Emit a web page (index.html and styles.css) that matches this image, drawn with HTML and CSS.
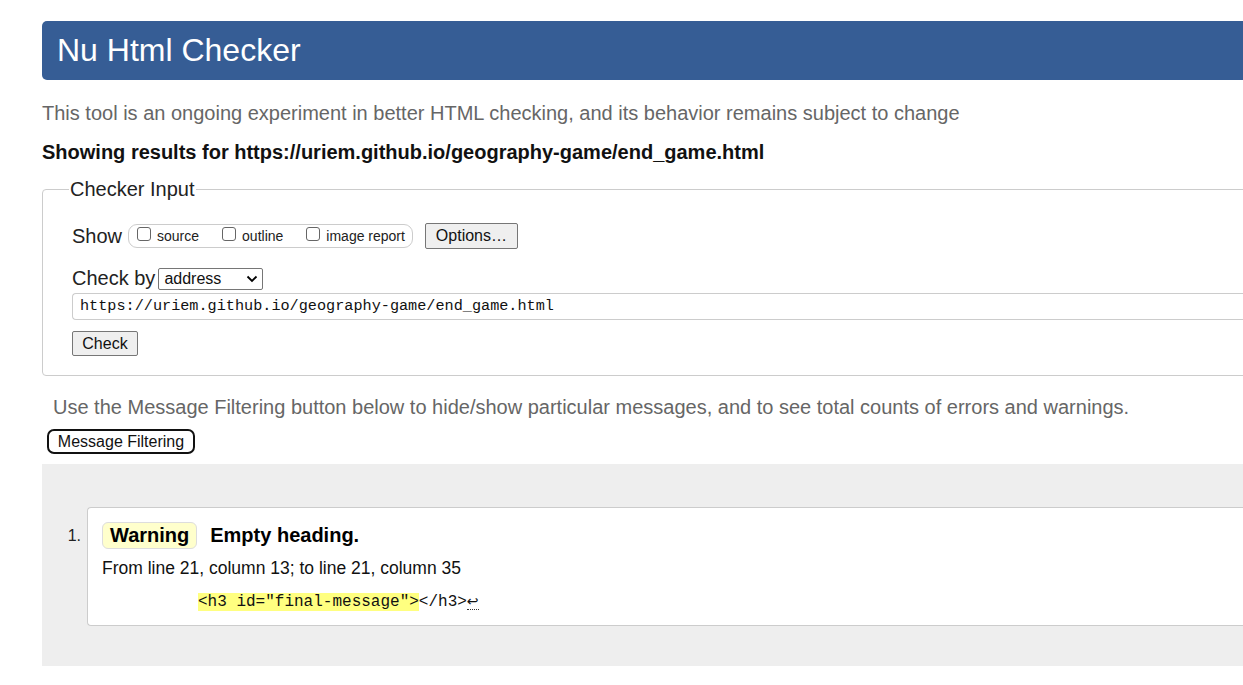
FILE: index.html
```
<!DOCTYPE html>
<html lang="en">
<head>
<meta charset="utf-8">
<title>Nu Html Checker</title>
<link rel="stylesheet" href="styles.css">
</head>
<body>
<div class="page">
  <h1 class="title">Nu Html Checker</h1>
  <p class="intro">This tool is an ongoing experiment in better HTML checking, and its behavior remains subject to change</p>
  <p class="results">Showing results for https://uriem.github.io/geography-game/end_game.html</p>
  <fieldset class="input-box">
    <legend class="legend">Checker Input</legend>
    <div class="row show-row">
      <span class="label">Show</span>
      <span class="show-group">
        <label class="opt"><span class="cb"></span>source</label>
        <label class="opt"><span class="cb"></span>outline</label>
        <label class="opt"><span class="cb"></span>image report</label>
      </span>
      <button class="btn options">Options…</button>
    </div>
    <div class="row check-row">
      <span class="label">Check by</span>
      <span class="select">address<svg class="chev" width="12" height="8" viewBox="0 0 12 8"><path d="M1.5 1.5 L6 6 L10.5 1.5" fill="none" stroke="#000" stroke-width="1.8"/></svg></span>
    </div>
    <div class="url">https://uriem.github.io/geography-game/end_game.html</div>
    <button class="btn check">Check</button>
  </fieldset>
  <p class="filter-note">Use the Message Filtering button below to hide/show particular messages, and to see total counts of errors and warnings.</p>
  <button class="filter-btn">Message Filtering</button>
  <div class="results-area">
    <ol class="msgs">
      <li class="msg">
        <span class="num">1.</span>
        <div class="card">
          <p class="msg-head"><span class="badge">Warning</span><span class="msg-text">Empty heading.</span></p>
          <p class="loc">From line 21, column 13; to line 21, column 35</p>
          <p class="extract"><span class="hl">&lt;h3 id="final-message"&gt;</span>&lt;/h3&gt;<span class="ret">↩</span></p>
        </div>
      </li>
    </ol>
  </div>
</div>
</body>
</html>
```
FILE: styles.css
```
html { overflow: hidden; }
body {
  margin: 0;
  font-family: "Liberation Sans", Arial, sans-serif;
  color: #111;
  background: #fff;
}
.page {
  width: 1400px;
  padding: 21px 0 0 42px;
}
.title {
  margin: 0;
  height: 59px;
  box-sizing: border-box;
  background: #365d95;
  color: #fff;
  border-radius: 5px;
  font-weight: normal;
  font-size: 32px;
  line-height: 59px;
  padding-left: 15px;
}
.intro {
  margin: 22px 0 0;
  font-size: 20px;
  line-height: 22px;
  color: #666;
}
.results {
  margin: 17px 0 0;
  font-size: 20px;
  line-height: 22px;
  font-weight: bold;
  color: #111;
}
.input-box {
  margin: 15px 0 0;
  border: 1px solid #ccc;
  border-radius: 4px;
  padding: 22px 0 19px 29px;
}
.legend {
  font-size: 20px;
  padding: 0 1px;
  margin-left: -3px;
  color: #222;
}
.row {
  display: flex;
  align-items: center;
}
.label {
  font-size: 20px;
  color: #222;
}
.show-group {
  display: inline-flex;
  align-items: center;
  margin-left: 6px;
  height: 22px;
  border: 1px solid #ccc;
  border-radius: 9px;
  padding: 0 7px 0 8px;
  font-size: 14px;
}
.opt {
  display: inline-flex;
  align-items: center;
  margin-right: 23px;
  color: #222;
}
.opt:last-child { margin-right: 0; }
.cb {
  display: inline-block;
  width: 12px;
  height: 12px;
  border: 1px solid #666;
  border-radius: 3px;
  margin-right: 6px;
  position: relative;
  top: -2px;
}
.btn {
  font-family: "Liberation Sans", Arial, sans-serif;
  background: #efefef;
  border: 1px solid #767676;
  border-radius: 2px;
  color: #111;
  padding: 0;
}
.options {
  margin-left: 12px;
  height: 26px;
  width: 93px;
  font-size: 16px;
}
.check-row { margin-top: 18px; }
.select {
  display: inline-flex;
  align-items: center;
  justify-content: space-between;
  margin-left: 3px;
  width: 105px;
  height: 22px;
  box-sizing: border-box;
  border: 1px solid #767676;
  border-radius: 2px;
  padding: 0 4px 0 5px;
  font-size: 16px;
  color: #111;
}
.url {
  margin-top: 3px;
  height: 27px;
  box-sizing: border-box;
  border: 1px solid #ccc;
  border-right: none;
  border-radius: 4px 0 0 4px;
  padding-left: 7px;
  font-family: "Liberation Mono", "DejaVu Sans Mono", monospace;
  font-size: 15.2px;
  line-height: 25px;
  color: #111;
}
.check {
  display: block;
  margin-top: 11px;
  width: 66px;
  height: 25px;
  font-size: 16px;
}
.filter-note {
  margin: 20px 0 0 11px;
  font-size: 20px;
  line-height: 22px;
  color: #666;
}
.filter-btn {
  display: block;
  margin: 11px 0 0 5px;
  height: 25px;
  width: 148px;
  box-sizing: border-box;
  padding: 0;
  border: 2px solid #111;
  border-radius: 7px;
  background: #fff;
  font-family: "Liberation Sans", Arial, sans-serif;
  font-size: 16px;
  color: #111;
}
.results-area {
  margin-top: 10px;
  background: #eee;
  height: 202px;
  padding-top: 43px;
  box-sizing: border-box;
}
.msgs {
  list-style: none;
  margin: 0;
  padding: 0;
}
.msg {
  display: flex;
  align-items: flex-start;
}
.num {
  width: 45px;
  text-align: right;
  padding-right: 6px;
  box-sizing: border-box;
  font-size: 16px;
  margin-top: 20px;
  color: #222;
}
.card {
  flex: 1;
  background: #fff;
  border: 1px solid #ccc;
  border-right: none;
  border-radius: 4px 0 0 4px;
  height: 119px;
  box-sizing: border-box;
  padding: 14px 0 0 14px;
}
.msg-head {
  margin: 0;
  display: flex;
  align-items: center;
}
.badge {
  display: inline-block;
  background: #ffffcc;
  border: 1px solid #ddd;
  border-radius: 6px;
  padding: 0 7px;
  height: 25px;
  line-height: 25px;
  font-weight: bold;
  font-size: 20px;
  color: #000;
}
.msg-text {
  margin-left: 13px;
  font-weight: bold;
  font-size: 20px;
  color: #000;
}
.loc {
  margin: 9px 0 0;
  font-size: 17.5px;
  color: #111;
}
.extract {
  margin: 12px 0 0 96px;
  font-family: "Liberation Mono", "DejaVu Sans Mono", monospace;
  font-size: 16px;
  line-height: 20px;
  color: #111;
}
.hl { background: #ffff80; }
.ret {
  border-bottom: 1px dotted #333;
  font-family: "DejaVu Sans", sans-serif;
  font-size: 14px;
}
```
